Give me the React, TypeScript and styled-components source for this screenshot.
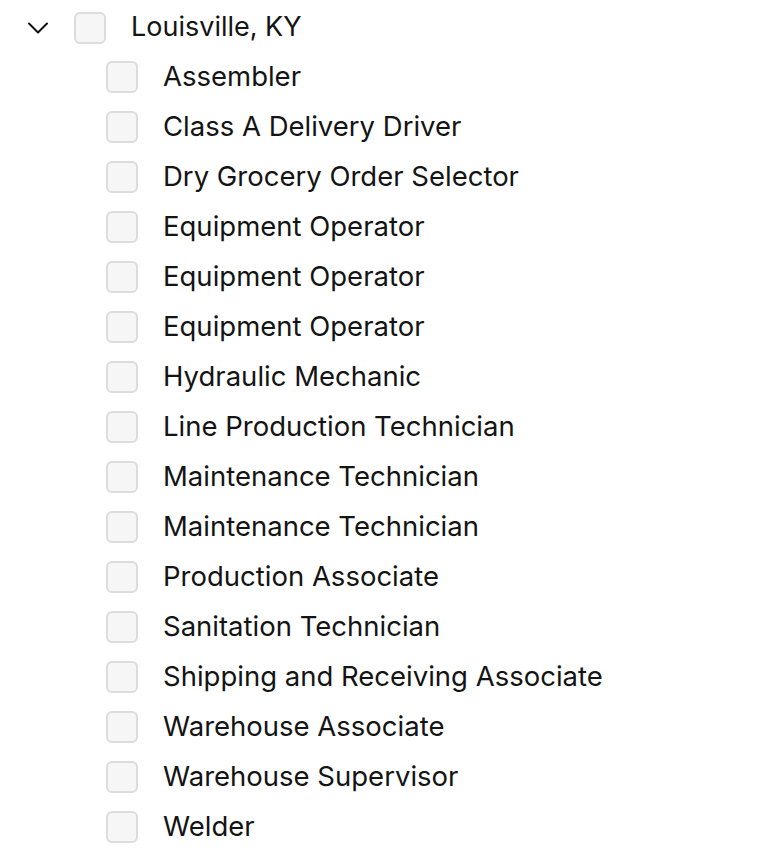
import React from 'react';
import styled, { createGlobalStyle } from 'styled-components';

const GlobalStyle = createGlobalStyle`
  body {
    margin: 0;
    background: #ffffff;
    font-family: Inter, "Noto Sans", sans-serif;
    color: #111111;
  }
`;

const jobs = [
  'Assembler',
  'Class A Delivery Driver',
  'Dry Grocery Order Selector',
  'Equipment Operator',
  'Equipment Operator',
  'Equipment Operator',
  'Hydraulic Mechanic',
  'Line Production Technician',
  'Maintenance Technician',
  'Maintenance Technician',
  'Production Associate',
  'Sanitation Technician',
  'Shipping and Receiving Associate',
  'Warehouse Associate',
  'Warehouse Supervisor',
  'Welder',
];

const Tree = styled.div`
  display: flex;
  flex-direction: column;
  padding: 12px 0 0 26px;
`;

const Row = styled.label`
  display: flex;
  align-items: center;
  height: 32px;
`;

const Toggle = styled.button`
  display: flex;
  align-items: center;
  justify-content: center;
  width: 24px;
  height: 24px;
  padding: 0;
  margin-right: 24px;
  border: none;
  background: transparent;
  color: #111111;
  cursor: pointer;
`;

const Box = styled.span`
  flex: none;
  width: 28px;
  height: 28px;
  border: 2px solid #dcdcdc;
  border-radius: 6px;
  background: #f6f6f6;
  margin-right: 25px;
`;

const Label = styled.span<{ $size?: number }>`
  font-size: ${(p) => p.$size || 27.5}px;
  line-height: 32px;
  margin-top: -2px;
  color: #141414;
  white-space: nowrap;
`;

const Children = styled.div`
  display: flex;
  flex-direction: column;
  margin-top: 8px;
`;

const ChildRow = styled.label`
  display: flex;
  align-items: center;
  height: 50px;
  padding-left: 80px;
`;

export default function App() {
  return (
    <>
      <GlobalStyle />
      <Tree>
        <Row>
          <Toggle aria-label="collapse">
            <svg width="24" height="24" viewBox="0 0 24 24" fill="none" stroke="currentColor" strokeWidth="2" strokeLinecap="round" strokeLinejoin="round">
              <path d="M3 7.5l9 9 9-9" />
            </svg>
          </Toggle>
          <Box />
          <Label $size={27}>Louisville, KY</Label>
        </Row>
        <Children>
          {jobs.map((job, i) => (
            <ChildRow key={i}>
              <Box />
              <Label>{job}</Label>
            </ChildRow>
          ))}
        </Children>
      </Tree>
    </>
  );
}
